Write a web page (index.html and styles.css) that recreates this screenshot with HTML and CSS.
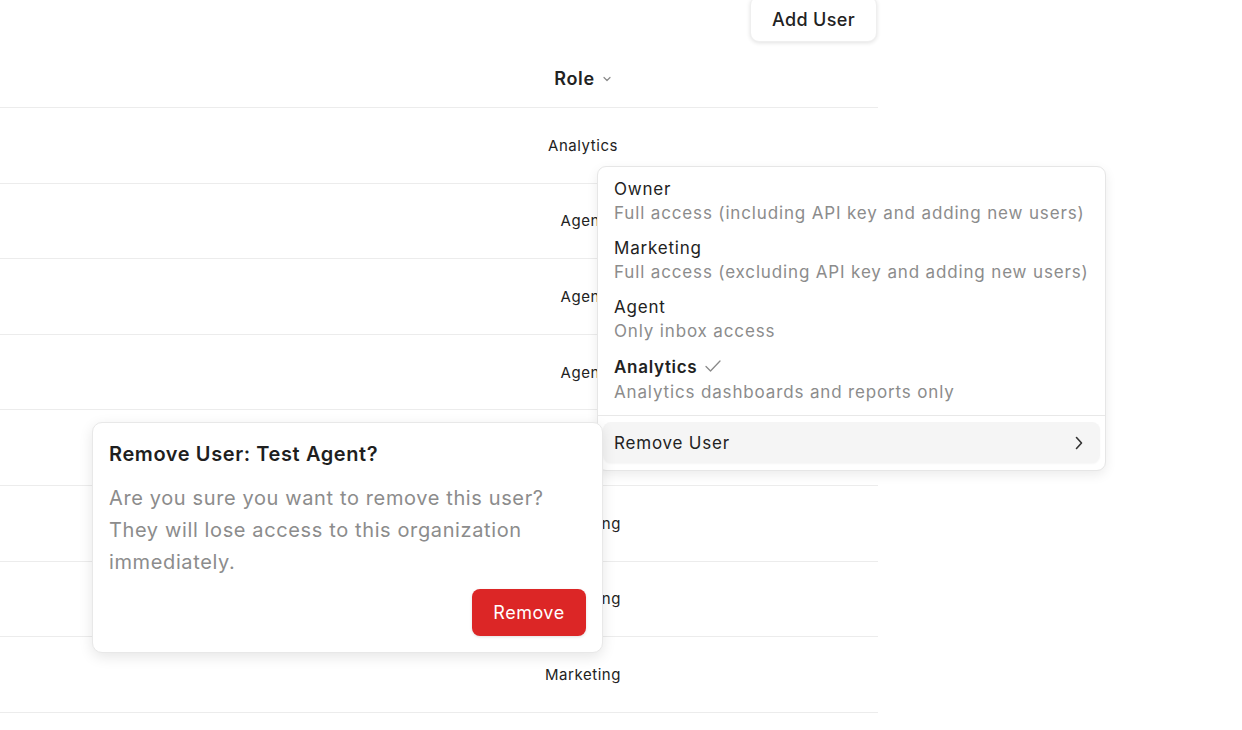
FILE: index.html
```html
<!DOCTYPE html>
<html>
<head>
<meta charset="utf-8">
<link rel="stylesheet" href="styles.css">
</head>
<body>
<div class="page">
  <div class="toolbar">
    <button class="add-btn">Add User</button>
  </div>
  <div class="table">
    <div class="row head">
      <div class="cell"></div>
      <div class="cell role-head">Role
        <svg class="sort" width="10" height="10" viewBox="0 0 10 10"><path d="M2 3.5 L5 6.5 L8 3.5" fill="none" stroke="#8a8a8a" stroke-width="1.2" stroke-linecap="round" stroke-linejoin="round"/></svg>
      </div>
      <div class="cell"></div>
    </div>
    <div class="row"><div class="cell"></div><div class="cell role">Analytics</div><div class="cell"></div></div>
    <div class="row"><div class="cell"></div><div class="cell role">Agent</div><div class="cell"></div></div>
    <div class="row"><div class="cell"></div><div class="cell role">Agent</div><div class="cell"></div></div>
    <div class="row"><div class="cell"></div><div class="cell role">Agent</div><div class="cell"></div></div>
    <div class="row"><div class="cell"></div><div class="cell role">Agent</div><div class="cell"></div></div>
    <div class="row"><div class="cell"></div><div class="cell role">Marketing</div><div class="cell"></div></div>
    <div class="row"><div class="cell"></div><div class="cell role">Marketing</div><div class="cell"></div></div>
    <div class="row"><div class="cell"></div><div class="cell role">Marketing</div><div class="cell"></div></div>
  </div>

  <div class="menu">
    <div class="item">
      <div class="item-title">Owner</div>
      <div class="item-desc">Full access (including API key and adding new users)</div>
    </div>
    <div class="item">
      <div class="item-title">Marketing</div>
      <div class="item-desc">Full access (excluding API key and adding new users)</div>
    </div>
    <div class="item">
      <div class="item-title">Agent</div>
      <div class="item-desc">Only inbox access</div>
    </div>
    <div class="item last">
      <div class="item-title selected">Analytics
        <svg class="check" width="18" height="14" viewBox="0 0 18 14"><path d="M2 7.5 L6.5 12 L16 2" fill="none" stroke="#8a8a8a" stroke-width="1.3" stroke-linecap="round" stroke-linejoin="round"/></svg>
      </div>
      <div class="item-desc">Analytics dashboards and reports only</div>
    </div>
    <div class="sep"></div>
    <div class="remove-item">
      <span>Remove User</span>
      <svg width="12" height="14" viewBox="0 0 12 14"><path d="M3.5 1.5 L8.5 7 L3.5 12.5" fill="none" stroke="#333" stroke-width="1.6" stroke-linecap="round" stroke-linejoin="round"/></svg>
    </div>
  </div>

  <div class="popover">
    <div class="pop-title">Remove User: Test Agent?</div>
    <div class="pop-body">Are you sure you want to remove this user? They will lose access to this organization immediately.</div>
    <div class="pop-actions">
      <button class="remove-btn">Remove</button>
    </div>
  </div>
</div>
</body>
</html>
```

FILE: styles.css
```css
* { box-sizing: border-box; }
html, body {
  margin: 0;
  padding: 0;
  background: #fff;
  font-family: Inter, "Noto Sans", sans-serif;
  color: #222;
  overflow: hidden;
}
.page {
  position: relative;
  width: 1242px;
  height: 730px;
}
.toolbar {
  width: 878px;
  height: 48px;
  display: flex;
  justify-content: flex-end;
  align-items: flex-start;
}
.add-btn {
  margin-top: -4px;
  width: 127px;
  height: 46px;
  border: 1px solid #efefef;
  border-radius: 9px;
  background: #fff;
  box-shadow: 0 1px 4px rgba(0,0,0,0.12);
  font-family: inherit;
  font-size: 18px;
  font-weight: 500;
  letter-spacing: 0.35px;
  color: #222;
  padding: 0;
  margin-right: 1px;
}
.table {
  width: 878px;
}
.row {
  display: grid;
  grid-template-columns: 510px 146px 222px;
  height: 75.6px;
  border-bottom: 1px solid #ececec;
  align-items: center;
}
.row.head {
  height: 60px;
}
.cell {
  text-align: center;
}
.role {
  font-size: 15px;
  letter-spacing: 0.55px;
  color: #222;
}
.role-head {
  font-size: 18px;
  font-weight: 600;
  letter-spacing: 0.7px;
  color: #222;
  display: flex;
  justify-content: center;
  align-items: center;
  gap: 7px;
  padding-top: 2px;
}
.sort { margin-top: 1px; }

.menu {
  position: absolute;
  left: 597px;
  top: 166px;
  width: 509px;
  height: 305px;
  background: #fff;
  border: 1px solid #e6e6e6;
  border-radius: 9px;
  box-shadow: 0 4px 12px rgba(0,0,0,0.08);
  padding: 4px 5px 6px;
}
.item {
  padding: 6px 11px 5px;
}
.item.last {
  padding-top: 7px;
}
.item-title {
  font-size: 17px;
  line-height: 24px;
  letter-spacing: 0.8px;
  color: #222;
  display: flex;
  align-items: center;
  gap: 7px;
}
.item-title.selected {
  font-weight: 600;
  letter-spacing: 0.7px;
}
.item-title.selected .check { margin-top: -3px; }
.item-desc {
  font-size: 17px;
  line-height: 24px;
  letter-spacing: 0.85px;
  color: #8c8c8c;
}
.item.last .item-desc { margin-top: 1px; }
.sep {
  height: 1px;
  background: #e8e8e8;
  margin: 6px -5px 6px;
}
.remove-item {
  height: 41px;
  border-radius: 8px;
  background: #f5f5f5;
  display: flex;
  align-items: center;
  justify-content: space-between;
  padding: 0 15px 0 11px;
  font-size: 17px;
  letter-spacing: 0.8px;
  color: #222;
  box-shadow: 0 1px 2px rgba(0,0,0,0.04);
}

.popover {
  position: absolute;
  left: 92px;
  top: 422px;
  width: 511px;
  height: 231px;
  background: #fff;
  border: 1px solid #e8e8e8;
  border-radius: 10px;
  box-shadow: 0 4px 14px rgba(0,0,0,0.1);
  padding: 17px 16px 16px;
}
.pop-title {
  font-size: 20px;
  font-weight: 600;
  line-height: 28px;
  letter-spacing: 0.6px;
  color: #1f1f1f;
}
.pop-body {
  margin-top: 14px;
  font-size: 20px;
  line-height: 32px;
  letter-spacing: 0.62px;
  color: #8c8c8c;
  padding-right: 20px;
}
.pop-actions {
  margin-top: 11px;
  display: flex;
  justify-content: flex-end;
}
.remove-btn {
  width: 114px;
  height: 47px;
  border: none;
  border-radius: 8px;
  background: #dc2626;
  color: #fff;
  font-family: inherit;
  font-size: 18px;
  font-weight: 400;
  letter-spacing: 0.5px;
  padding: 0;
  box-shadow: 0 1px 3px rgba(0,0,0,0.12);
}
```
